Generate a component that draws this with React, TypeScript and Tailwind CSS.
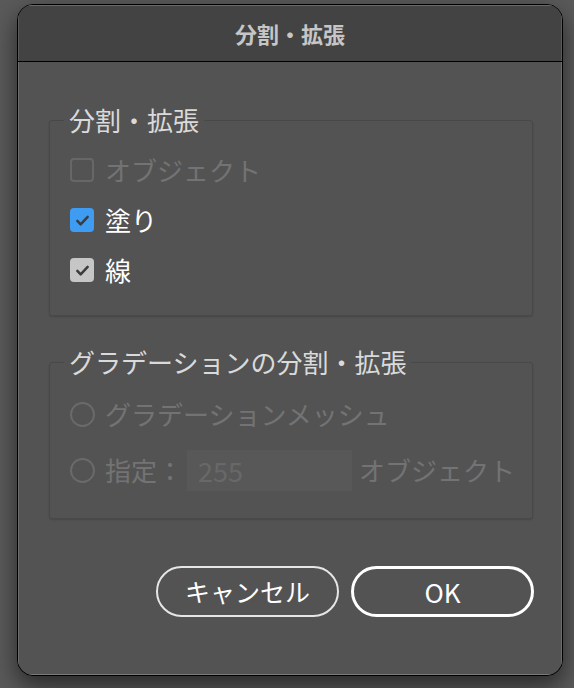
import React from 'react';

const font = { fontFamily: '"Noto Sans CJK JP", "Noto Sans", sans-serif' };

const CheckMark: React.FC = () => (
  <svg viewBox="0 0 24 24" className="w-[19px] h-[19px]">
    <path d="M5.5 12.5l4.2 4.3L18.5 7.5" fill="none" stroke="#3c3c3c" strokeWidth="3.2" strokeLinecap="round" strokeLinejoin="round" />
  </svg>
);

const CheckRow: React.FC<{ label: string; state: 'off' | 'blue' | 'gray' }> = ({ label, state }) => (
  <div className="flex items-center h-[50px]">
    {state === 'off' && (
      <span className="w-[24px] h-[24px] rounded-[4px] border-2 border-[#676767]" />
    )}
    {state === 'blue' && (
      <span className="w-[24px] h-[24px] rounded-[4px] bg-[#3f9cf3] flex items-center justify-center">
        <CheckMark />
      </span>
    )}
    {state === 'gray' && (
      <span className="w-[24px] h-[24px] rounded-[4px] bg-[#c6c6c6] flex items-center justify-center">
        <CheckMark />
      </span>
    )}
    <span className={`ml-[11px] text-[26px] leading-[26px] ${state === 'off' ? 'text-[#737373]' : 'text-white'}`}>
      {label}
    </span>
  </div>
);

const Radio: React.FC = () => (
  <span className="w-[25px] h-[25px] rounded-full border-2 border-[#6a6a6a]" />
);

export default function App() {
  return (
    <div className="w-[574px] h-[688px] bg-[#5a5a5a] pt-[4px] pl-[17px]" style={font}>
      <div className="w-[546px] h-[672px] rounded-[16px] border border-black bg-[#535353] overflow-hidden flex flex-col shadow-[0_10px_24px_rgba(0,0,0,0.55)]">
        <div className="h-[57px] bg-[#434343] border-b border-black flex items-center justify-center shadow-[inset_0_1px_0_#6a6a6a,inset_1px_0_0_#5a5a5a,inset_-1px_0_0_#5a5a5a]">
          <span className="text-[22px] font-bold text-[#c6c6c6] leading-none">分割・拡張</span>
        </div>
        <div className="flex-1 flex flex-col px-[31px] shadow-[inset_0_-1px_0_#7a7a7a,inset_1px_0_0_#6c6c6c,inset_-1px_0_0_#6c6c6c]">
          <fieldset className="mt-[45px] w-[484px] border border-[#484848] rounded-[3px] pl-[20px] pt-[12px] pb-[20px] shadow-[0_1px_2px_rgba(0,0,0,0.15)]">
            <legend className="ml-[-6px] px-[5px] text-[26px] leading-[26px] text-[#dadada]">分割・拡張</legend>
            <CheckRow label="オブジェクト" state="off" />
            <CheckRow label="塗り" state="blue" />
            <CheckRow label="線" state="gray" />
          </fieldset>

          <fieldset className="mt-[33px] w-[484px] border border-[#484848] rounded-[3px] pl-[20px] pt-[14px] pb-[23px] shadow-[0_1px_2px_rgba(0,0,0,0.15)]">
            <legend className="ml-[-6px] px-[5px] text-[26px] leading-[26px] text-[#dadada]">グラデーションの分割・拡張</legend>
            <div className="flex items-center h-[50px]">
              <Radio />
              <span className="ml-[10px] text-[26px] leading-[26px] text-[#737373]">グラデーションメッシュ</span>
            </div>
            <div className="flex items-center h-[50px] mt-[6px]">
              <Radio />
              <span className="ml-[10px] text-[26px] leading-[26px] text-[#737373]">指定：</span>
              <div className="ml-[4px] w-[165px] h-[41px] bg-[#585858] flex items-center pl-[11px]">
                <span className="text-[27px] leading-none text-[#686868]">255</span>
              </div>
              <span className="ml-[7px] text-[26px] leading-[26px] text-[#737373]">オブジェクト</span>
            </div>
          </fieldset>

          <div className="mt-[47px] flex justify-end gap-[12px] mr-[-3px]">
            <button className="w-[183px] h-[51px] rounded-full border-2 border-[#e6e6e6] text-white text-[25px] leading-none">
              キャンセル
            </button>
            <button className="w-[183px] h-[51px] rounded-full border-[3px] border-white text-white text-[26px] leading-none">
              OK
            </button>
          </div>
        </div>
      </div>
    </div>
  );
}
